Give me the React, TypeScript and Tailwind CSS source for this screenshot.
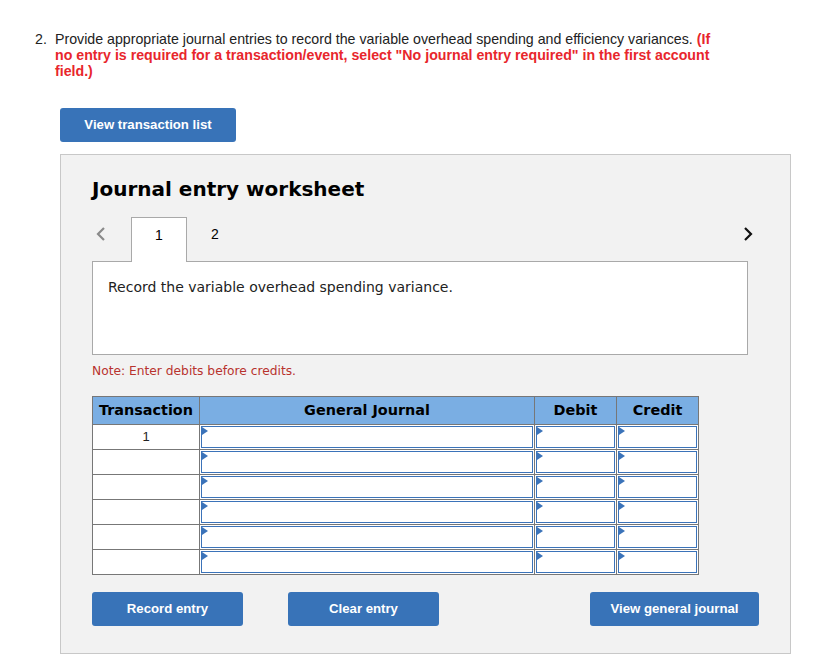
import React from "react";

const verdana = { fontFamily: '"DejaVu Sans", Verdana, sans-serif' };
const arial = { fontFamily: '"Liberation Sans", Arial, sans-serif' };

function EntryInput() {
  return (
    <div className="relative m-px h-[22px] border border-[#3b73b9] bg-white">
      <span className="absolute left-0 top-0 h-0 w-0 border-y-[4px] border-l-[6px] border-y-transparent border-l-[#3b73b9]" />
    </div>
  );
}

function Btn({ label, w }: { label: string; w: string }) {
  return (
    <button
      className={`h-[34px] ${w} rounded-[3px] bg-[#3873b8] text-[13.2px] font-bold text-white`}
      style={arial}
    >
      {label}
    </button>
  );
}

export default function App() {
  const rows = ["1", "", "", "", "", ""];
  return (
    <div className="min-h-[672px] bg-white pl-[35px] pt-[31px]" style={arial}>
      <div className="flex w-[720px] text-[14.2px] leading-[16px] text-[#222]">
        <span className="w-[20px] shrink-0">2.</span>
        <p className="whitespace-nowrap">
          Provide appropriate journal entries to record the variable overhead spending and efficiency variances.{" "}
          <span className="font-bold text-[#e8262c]">
            (If
            <br />
            no entry is required for a transaction/event, select "No journal entry required" in the first account
            <br />
            field.)
          </span>
        </p>
      </div>

      <div className="ml-[25px] mt-[29px]">
        <Btn label="View transaction list" w="w-[176px]" />
      </div>

      <div className="ml-[25px] mt-[12px] h-[500px] w-[731px] border border-[#c8c8c8] bg-[#f2f2f2] pl-[31px] pt-[20px]" style={verdana}>
        <h2 className="text-[20px] font-bold leading-[28px] text-black">Journal entry worksheet</h2>

        <div className="mt-[14px] flex h-[45px] w-[656px] items-center pb-[10px]">
          <svg width="12" height="16" viewBox="0 0 12 16" className="ml-[3px] mt-[-2px]">
            <path d="M9 2 L3 8 L9 14" stroke="#8a8a8a" strokeWidth="2.2" fill="none" />
          </svg>
          <div className="relative z-10 ml-[24px] flex h-[45px] w-[56px] items-center justify-center self-start border border-b-0 border-[#a9a9a9] bg-white pb-[10px] text-[14px] text-black" style={arial}>
            1
          </div>
          <div className="flex h-[35px] w-[56px] items-center justify-center text-[14px] text-black" style={arial}>
            2
          </div>
          <div className="flex-1" />
          <svg width="12" height="16" viewBox="0 0 12 16" className="mr-[-6px] mt-[-2px]">
            <path d="M3 2 L9 8 L3 14" stroke="#111" strokeWidth="2.2" fill="none" />
          </svg>
        </div>

        <div className="-mt-px h-[94px] w-[656px] border border-[#a9a9a9] bg-white px-[15px] pt-[15px] text-[14px] text-[#222]">
          Record the variable overhead spending variance.
        </div>

        <p className="mt-[8px] text-[12.25px] leading-[16px] text-[#b8332e]">Note: Enter debits before credits.</p>

        <table className="mt-[17px] w-[607px] border-collapse text-[14.4px]">
          <thead>
            <tr className="h-[28px] bg-[#7aaee3]">
              <th className="w-[107px] border border-[#777] px-0 font-bold text-black">Transaction</th>
              <th className="w-[335px] border border-[#777] font-bold text-black">General Journal</th>
              <th className="w-[82px] border border-[#777] font-bold text-black">Debit</th>
              <th className="w-[82px] border border-[#777] font-bold text-black">Credit</th>
            </tr>
          </thead>
          <tbody>
            {rows.map((r, i) => (
              <tr key={i} className="h-[25px] bg-white">
                <td className="border border-[#777] text-center text-[13px] text-[#222]" style={arial}>{r}</td>
                <td className="border border-[#777] p-0">
                  <EntryInput />
                </td>
                <td className="border border-[#777] p-0">
                  <EntryInput />
                </td>
                <td className="border border-[#777] p-0">
                  <EntryInput />
                </td>
              </tr>
            ))}
          </tbody>
        </table>

        <div className="mt-[17px] flex w-[667px] items-center">
          <Btn label="Record entry" w="w-[151px]" />
          <div className="w-[45px]" />
          <Btn label="Clear entry" w="w-[151px]" />
          <div className="flex-1" />
          <Btn label="View general journal" w="w-[169px]" />
        </div>
      </div>
    </div>
  );
}
